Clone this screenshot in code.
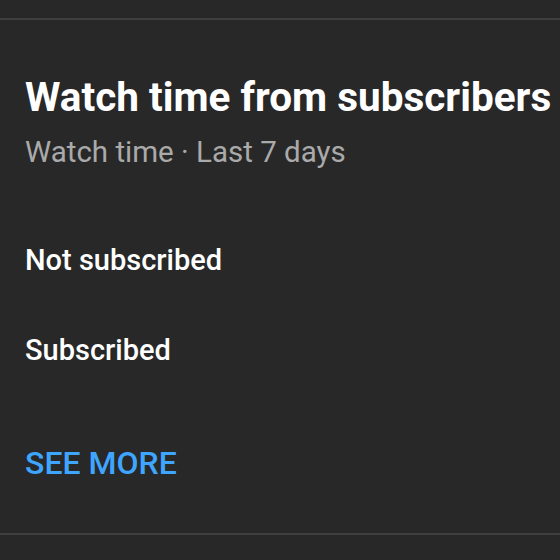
export default function App() {
  return (
    <div className="w-[560px] h-[560px] bg-[#282828] overflow-hidden" style={{ fontFamily: "Roboto, 'Liberation Sans', sans-serif" }}>
      <div className="h-[18px]" />
      <div className="h-[2px] bg-[#3f3f3f]" />
      <div className="pl-[25px] pt-[55px]">
        <h1 className="text-[40.5px] leading-[44px] font-bold text-white whitespace-nowrap">Watch time from subscribers</h1>
        <p className="mt-[16px] text-[29.5px] leading-[34px] text-[#aaaaaa] whitespace-nowrap">Watch time · Last 7 days</p>
        <div className="mt-[74px] text-[29px] leading-[34px] text-white font-medium">Not subscribed</div>
        <div className="mt-[56px] text-[29px] leading-[34px] text-white font-medium">Subscribed</div>
        <div className="mt-[78px] text-[32px] leading-[36px] text-[#3ea6ff] font-medium">SEE MORE</div>
      </div>
      <div className="mt-[52px] h-[2px] bg-[#3f3f3f]" />
    </div>
  );
}
